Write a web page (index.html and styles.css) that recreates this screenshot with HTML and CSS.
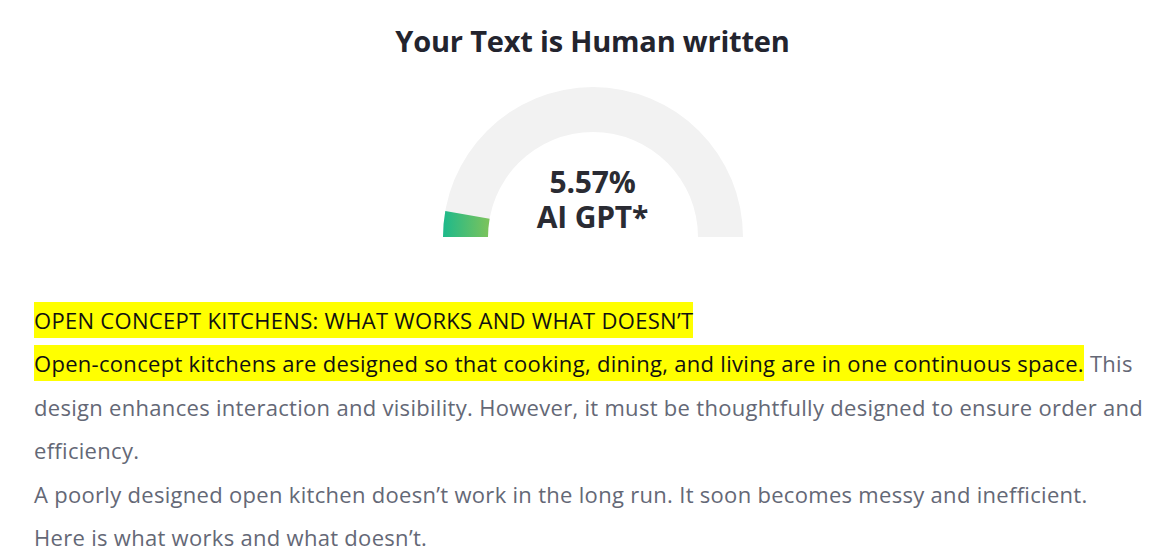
FILE: index.html
```html
<!DOCTYPE html>
<html>
<head>
<meta charset="utf-8">
<link rel="stylesheet" href="styles.css">
</head>
<body>
<main class="result">
  <h1 class="title">Your Text is Human written</h1>
  <div class="gauge">
    <svg class="gauge-svg" width="302" height="153" viewBox="0 0 302 153">
      <defs>
        <linearGradient id="g" x1="0" y1="0" x2="1" y2="0">
          <stop offset="0" stop-color="#1db98b"/>
          <stop offset="1" stop-color="#7dc35b"/>
        </linearGradient>
      </defs>
      <path d="M1 152 A150 150 0 0 1 301 152 L256 152 A105 105 0 0 0 46 152 Z" fill="#f2f2f2"/>
      <path d="M1 152 A150 150 0 0 1 3.28 125.95 L47.6 133.77 A105 105 0 0 0 46 152 Z" fill="url(#g)"/>
    </svg>
    <div class="gauge-label">
      <span class="gauge-value">5.57%</span>
      <span class="gauge-value">AI GPT*</span>
    </div>
  </div>
  <div class="content">
    <p class="line"><mark>OPEN CONCEPT KITCHENS: WHAT WORKS AND WHAT DOESN’T</mark></p>
    <p class="line"><mark>Open-concept kitchens are designed so that cooking, dining, and living are in one continuous space.</mark> This design enhances interaction and visibility. However, it must be thoughtfully designed to ensure order and efficiency.</p>
    <p class="line">A poorly designed open kitchen doesn’t work in the long run. It soon becomes messy and inefficient.<br>Here is what works and what doesn’t.</p>
  </div>
</main>
</body>
</html>
```
FILE: styles.css
```css
html, body {
  margin: 0;
  padding: 0;
  background: #ffffff;
}
body {
  font-family: "Open Sans", "Noto Sans", sans-serif;
}
.result {
  padding: 0 6px 0 34px;
}
.title {
  margin: 0;
  padding-top: 22px;
  text-align: center;
  font-size: 29px;
  line-height: 38px;
  font-weight: 700;
  color: #23242e;
  letter-spacing: -0.2px;
}
.gauge {
  position: relative;
  width: 302px;
  height: 153px;
  margin: 25px auto 0;
}
.gauge-svg {
  display: block;
}
.gauge-label {
  position: absolute;
  left: 0;
  right: 0;
  top: 80px;
  display: flex;
  flex-direction: column;
  align-items: center;
  gap: 1px;
  font-size: 30px;
  font-weight: 700;
  color: #2a2b33;
  letter-spacing: -0.2px;
}
.gauge-value {
  line-height: 34px;
}
.content {
  margin-top: 61px;
  font-size: 22px;
  line-height: 43.4px;
  letter-spacing: 0.3px;
  color: #646876;
}
.line {
  margin: 0;
}
mark {
  background: #ffff00;
  color: #111111;
  padding: 3px 0;
}
```
